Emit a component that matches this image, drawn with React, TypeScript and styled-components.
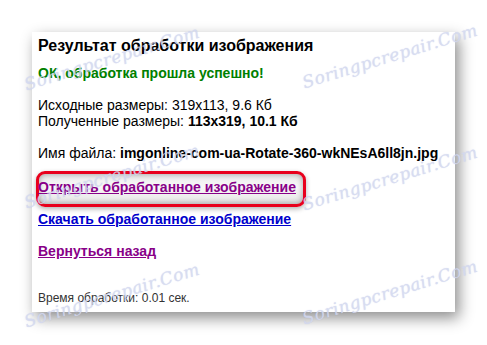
import React from "react";
import styled, { createGlobalStyle } from "styled-components";

const GlobalStyle = createGlobalStyle`
  html, body {
    margin: 0;
    padding: 0;
    background: #fff;
  }
  body {
    font-family: "Liberation Sans", Arial, sans-serif;
  }
`;

const Page = styled.div`
  position: relative;
  width: 487px;
  height: 345px;
  overflow: hidden;
  padding: 32px 0 0 32px;
  box-sizing: border-box;
`;

const Card = styled.div`
  width: 423px;
  height: 280px;
  box-sizing: border-box;
  padding: 5px 6px 0 6px;
  background: #fff;
  box-shadow: 4px 6px 14px rgba(0, 0, 0, 0.45);
  color: #000;
`;

const Title = styled.h2`
  margin: 0;
  font-size: 16px;
  line-height: 18px;
  font-weight: bold;
`;

const Success = styled.p`
  margin: 10px 0 0;
  font-size: 14px;
  line-height: 16px;
  font-weight: bold;
  color: #008000;
`;

const Info = styled.p<{ $gap: number }>`
  margin: ${(p) => p.$gap}px 0 0;
  font-size: 14px;
  line-height: 16px;
`;

const Strong = styled.b`
  font-weight: bold;
`;

const LinkRow = styled.div<{ $gap: number }>`
  position: relative;
  margin-top: ${(p) => p.$gap}px;
  font-size: 14px;
  line-height: 16px;
`;

const Link = styled.a<{ $visited?: boolean }>`
  position: relative;
  z-index: 1;
  font-weight: bold;
  text-decoration: underline;
  color: ${(p) => (p.$visited ? "#880088" : "#0000cc")};
`;

const Highlight = styled.span`
  position: absolute;
  left: -2px;
  top: -8px;
  width: 270px;
  height: 36px;
  box-sizing: border-box;
  border: 3px solid #e8001c;
  border-radius: 9px;
  background: linear-gradient(#ececec, #f8f8f8 45%, #e4e4e4);
  box-shadow: inset 0 0 6px rgba(0, 0, 0, 0.35), 0 2px 5px rgba(0, 0, 0, 0.3);
`;

const Timing = styled.p`
  margin: 32px 0 0;
  font-size: 12px;
  line-height: 14px;
  color: #333;
`;

const Watermark = styled.span<{ $x: number; $y: number }>`
  position: absolute;
  left: ${(p) => p.$x}px;
  top: ${(p) => p.$y}px;
  transform: translate(-50%, -50%) rotate(-17deg);
  font-family: "DejaVu Serif", serif;
  font-style: italic;
  font-size: 17px;
  letter-spacing: 0.5px;
  white-space: nowrap;
  color: rgba(215, 220, 242, 0.8);
  text-shadow: 0 0 1px rgba(160, 170, 215, 0.45);
  pointer-events: none;
  z-index: 2;
`;

const marks = [
  { x: 112, y: 58 },
  { x: 390, y: 56 },
  { x: 112, y: 176 },
  { x: 390, y: 178 },
  { x: 112, y: 295 },
  { x: 390, y: 292 },
];

export default function App() {
  return (
    <>
      <GlobalStyle />
      <Page>
        <Card>
          <Title>Результат обработки изображения</Title>
          <Success>ОК, обработка прошла успешно!</Success>
          <Info $gap={16}>
            Исходные размеры: 319x113, 9.6 Кб
            <br />
            Полученные размеры: <Strong>113x319, 10.1 Кб</Strong>
          </Info>
          <Info $gap={16}>
            Имя файла: <Strong>imgonline-com-ua-Rotate-360-wkNEsA6ll8jn.jpg</Strong>
          </Info>
          <LinkRow $gap={18}>
            <Highlight />
            <Link href="#" $visited>
              Открыть обработанное изображение
            </Link>
          </LinkRow>
          <LinkRow $gap={16}>
            <Link href="#">Скачать обработанное изображение</Link>
          </LinkRow>
          <LinkRow $gap={16}>
            <Link href="#" $visited>
              Вернуться назад
            </Link>
          </LinkRow>
          <Timing>Время обработки: 0.01 сек.</Timing>
        </Card>
        {marks.map((m, i) => (
          <Watermark key={i} $x={m.x} $y={m.y}>
            Soringpcrepair.Com
          </Watermark>
        ))}
      </Page>
    </>
  );
}
